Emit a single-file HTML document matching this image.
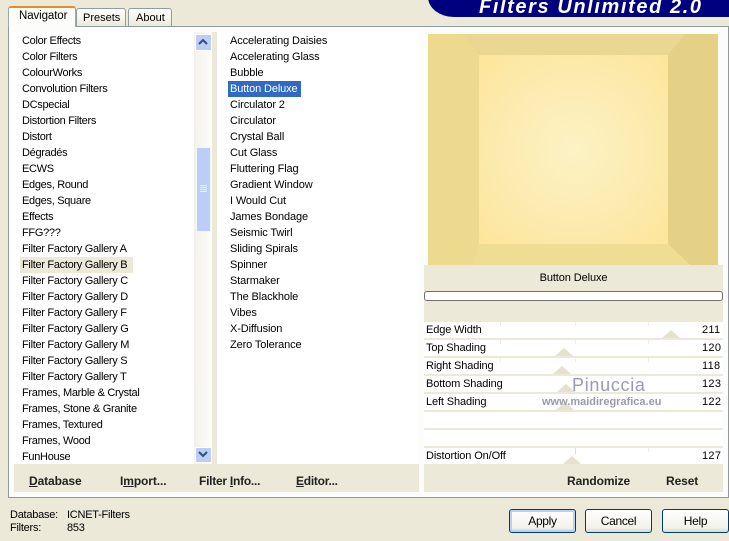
<!DOCTYPE html>
<html><head><meta charset="utf-8"><style>
html,body{margin:0;padding:0}
body{width:729px;height:541px;position:relative;overflow:hidden;background:#ece9d8;font:11px "Liberation Sans",Arial,sans-serif;color:#000}
.a{position:absolute}
.t{position:absolute;white-space:nowrap;line-height:16px;height:16px}
.b{font-weight:bold;font-size:12px;color:#222;letter-spacing:-.1px}
u{text-decoration:underline}
.btn{position:absolute;top:509px;width:65px;height:22px;border:1px solid #003c74;border-radius:3px;background:linear-gradient(#fff,#f3f2ea 80%,#dcd8c8);text-align:center;line-height:22px;font-size:12px;letter-spacing:-.3px}
.row{position:absolute;left:424px;width:299px;height:16px;background:#fff;border-bottom:2px solid #ece9d8}
.tri{position:absolute;width:0;height:0;border-left:9px solid transparent;border-right:9px solid transparent;border-bottom:8px solid #e6e1cd}
.tick{position:absolute;width:1px;height:4px;background:#f0eee2}
</style></head><body>
<div class="a" style="left:428px;top:-20px;width:310px;height:37px;background:#00007f;border-radius:0 0 0 26px / 0 0 0 20px"></div>
<div class="t" style="left:479px;top:-1px;color:#fff;font:italic bold 20px/17px 'Liberation Sans',sans-serif;letter-spacing:1.6px">Filters Unlimited 2.0</div>

<div class="a" style="left:8px;top:26px;width:719px;height:470px;border:1px solid #8f9a9c;background:#fcfcfa"></div>
<div class="a" style="left:76px;top:8px;width:48px;height:17px;border:1px solid #8f9d9d;border-radius:3px 3px 0 0;background:linear-gradient(#fff,#ece9dc)"></div>
<div class="a" style="left:128px;top:8px;width:42px;height:17px;border:1px solid #8f9d9d;border-radius:3px 3px 0 0;background:linear-gradient(#fff,#ece9dc)"></div>
<div class="a" style="left:8px;top:6px;width:68px;height:21px;background:#fcfcfa;border:1px solid #9aa;border-bottom:0;border-top:2px solid #e68b2c;border-radius:3px 3px 0 0;box-sizing:border-box"></div>
<div class="t" style="left:19px;top:8px;font-size:11.500px;letter-spacing:-.1px">Navigator</div>
<div class="t" style="left:83px;top:10px">Presets</div>
<div class="t" style="left:136px;top:10px">About</div>

<div class="a" style="left:14px;top:32px;width:180px;height:432px;background:#fff"></div>
<div class="a" style="left:194px;top:32px;width:18px;height:432px;background:linear-gradient(90deg,#f3f1e8,#fdfdfb)"></div>
<div class="a" style="left:212px;top:32px;width:5px;height:432px;background:#ece9d8"></div>
<div class="a" style="left:217px;top:32px;width:202px;height:432px;background:#fff"></div>
<div class="a" style="left:419px;top:32px;width:5px;height:432px;background:#fcfcfa"></div>

<div class="a" style="left:195px;top:34px;width:15px;height:15px;border:1px solid #fff;background:#bccdf6"></div>
<svg class="a" style="left:197px;top:37px" width="12" height="10"><path d="M2 7L6 3L10 7" fill="none" stroke="#2f4d8a" stroke-width="2"/></svg>
<div class="a" style="left:196px;top:147px;width:13px;height:83px;border:1px solid #f4f6fc;background:#bccdf8"></div>
<svg class="a" style="left:199px;top:184px" width="9" height="10"><path d="M1 1.500H8M1 3.500H8M1 5.500H8M1 7.500H8" stroke="#eef2fd" stroke-width="1"/></svg>
<div class="a" style="left:195px;top:447px;width:15px;height:14px;border:1px solid #fff;background:#bccdf6"></div>
<svg class="a" style="left:197px;top:449px" width="12" height="10"><path d="M2 3L6 7L10 3" fill="none" stroke="#2f4d8a" stroke-width="2"/></svg>

<div class="a" style="left:20px;top:257px;width:113px;height:16px;background:#ece9d8"></div>
<div class="a" style="left:228px;top:81px;width:73px;height:16px;background:#316ac5"></div>

<div style="letter-spacing:-.3px">
<div class="t" style="left:22px;top:33px">Color Effects</div>
<div class="t" style="left:22px;top:49px">Color Filters</div>
<div class="t" style="left:22px;top:65px">ColourWorks</div>
<div class="t" style="left:22px;top:81px">Convolution Filters</div>
<div class="t" style="left:22px;top:97px">DCspecial</div>
<div class="t" style="left:22px;top:113px">Distortion Filters</div>
<div class="t" style="left:22px;top:129px">Distort</div>
<div class="t" style="left:22px;top:145px">Dégradés</div>
<div class="t" style="left:22px;top:161px">ECWS</div>
<div class="t" style="left:22px;top:177px">Edges, Round</div>
<div class="t" style="left:22px;top:193px">Edges, Square</div>
<div class="t" style="left:22px;top:209px">Effects</div>
<div class="t" style="left:22px;top:225px">FFG???</div>
<div class="t" style="left:22px;top:241px">Filter Factory Gallery A</div>
<div class="t" style="left:22px;top:257px">Filter Factory Gallery B</div>
<div class="t" style="left:22px;top:273px">Filter Factory Gallery C</div>
<div class="t" style="left:22px;top:289px">Filter Factory Gallery D</div>
<div class="t" style="left:22px;top:305px">Filter Factory Gallery F</div>
<div class="t" style="left:22px;top:321px">Filter Factory Gallery G</div>
<div class="t" style="left:22px;top:337px">Filter Factory Gallery M</div>
<div class="t" style="left:22px;top:353px">Filter Factory Gallery S</div>
<div class="t" style="left:22px;top:369px">Filter Factory Gallery T</div>
<div class="t" style="left:22px;top:385px">Frames, Marble &amp; Crystal</div>
<div class="t" style="left:22px;top:401px">Frames, Stone &amp; Granite</div>
<div class="t" style="left:22px;top:417px">Frames, Textured</div>
<div class="t" style="left:22px;top:433px">Frames, Wood</div>
<div class="t" style="left:22px;top:449px">FunHouse</div>
</div>

<div style="letter-spacing:-.12px">
<div class="t" style="left:230px;top:33px">Accelerating Daisies</div>
<div class="t" style="left:230px;top:49px">Accelerating Glass</div>
<div class="t" style="left:230px;top:65px">Bubble</div>
<div class="t" style="left:230px;top:81px;color:#fff">Button Deluxe</div>
<div class="t" style="left:230px;top:97px">Circulator 2</div>
<div class="t" style="left:230px;top:113px">Circulator</div>
<div class="t" style="left:230px;top:129px">Crystal Ball</div>
<div class="t" style="left:230px;top:145px">Cut Glass</div>
<div class="t" style="left:230px;top:161px">Fluttering Flag</div>
<div class="t" style="left:230px;top:177px">Gradient Window</div>
<div class="t" style="left:230px;top:193px">I Would Cut</div>
<div class="t" style="left:230px;top:209px">James Bondage</div>
<div class="t" style="left:230px;top:225px">Seismic Twirl</div>
<div class="t" style="left:230px;top:241px">Sliding Spirals</div>
<div class="t" style="left:230px;top:257px">Spinner</div>
<div class="t" style="left:230px;top:273px">Starmaker</div>
<div class="t" style="left:230px;top:289px">The Blackhole</div>
<div class="t" style="left:230px;top:305px">Vibes</div>
<div class="t" style="left:230px;top:321px">X-Diffusion</div>
<div class="t" style="left:230px;top:337px">Zero Tolerance</div>
</div>

<svg class="a" style="left:428px;top:34px" width="290" height="231">
<defs><radialGradient id="g" cx="50%" cy="50%" r="68%"><stop offset="0" stop-color="#fcf2c4"/><stop offset="0.5" stop-color="#fcecb2"/><stop offset="1" stop-color="#fde59c"/></radialGradient></defs>
<rect width="290" height="231" fill="#eeda90"/>
<polygon points="35,0 257,0 240,21 51,21" fill="#e9d792"/>
<polygon points="240,21 257,0 290,0 290,231 262,231 240,210" fill="#e5d186"/>
<polygon points="51,210 240,210 262,231 0,231" fill="#f0dd94"/>
<polygon points="0,0 35,0 51,21 51,210 45,231 0,231" fill="#eeda8e"/>
<rect x="51" y="21" width="189" height="189" fill="url(#g)"/>
</svg>

<div class="a" style="left:424px;top:265px;width:299px;height:57px;background:#ece9d8"></div>
<div class="t" style="left:424px;top:270px;width:299px;text-align:center;letter-spacing:-.1px">Button Deluxe</div>
<div class="a" style="left:424px;top:291px;width:297px;height:8px;background:#fff;border:1px solid #707070;border-radius:3px"></div>

<div class="row" style="top:322px"></div>
<div class="row" style="top:340px"></div>
<div class="row" style="top:358px"></div>
<div class="row" style="top:376px"></div>
<div class="row" style="top:394px"></div>
<div class="row" style="top:412px"></div>
<div class="row" style="top:430px"></div>
<div class="row" style="top:448px;border:0"></div>
<div class="tick" style="left:500px;top:322px"></div><div class="tick" style="left:575px;top:322px"></div><div class="tick" style="left:648px;top:322px"></div>
<div class="tick" style="left:500px;top:340px"></div><div class="tick" style="left:575px;top:340px"></div><div class="tick" style="left:648px;top:340px"></div>
<div class="tick" style="left:500px;top:358px"></div><div class="tick" style="left:575px;top:358px"></div><div class="tick" style="left:648px;top:358px"></div>
<div class="tick" style="left:575px;top:448px;height:6px;background:#ddd"></div><div class="tick" style="left:648px;top:448px"></div>
<div class="tri" style="left:662px;top:330px"></div>
<div class="tri" style="left:555px;top:348px"></div>
<div class="tri" style="left:553px;top:366px"></div>
<div class="tri" style="left:557px;top:384px"></div>
<div class="tri" style="left:556px;top:402px"></div>
<div class="tri" style="left:563px;top:456px"></div>

<div style="letter-spacing:-.12px">
<div class="t" style="left:426px;top:322px">Edge Width</div>
<div class="t" style="left:426px;top:340px">Top Shading</div>
<div class="t" style="left:426px;top:358px">Right Shading</div>
<div class="t" style="left:426px;top:376px">Bottom Shading</div>
<div class="t" style="left:426px;top:394px">Left Shading</div>
<div class="t" style="left:426px;top:448px">Distortion On/Off</div>
</div>
<div style="letter-spacing:.3px">
<div class="t" style="left:702px;top:322px">211</div>
<div class="t" style="left:702px;top:340px">120</div>
<div class="t" style="left:702px;top:358px">118</div>
<div class="t" style="left:702px;top:376px">123</div>
<div class="t" style="left:702px;top:394px">122</div>
<div class="t" style="left:702px;top:448px">127</div>
</div>

<div class="t" style="left:572px;top:376px;color:#9a9ab8;font-size:18px;line-height:18px;letter-spacing:.7px">Pinuccia</div>
<div class="t" style="left:542px;top:394px;color:#9a9aa8;font-size:11px;font-weight:bold;letter-spacing:0">www.maidiregrafica.eu</div>

<div class="a" style="left:14px;top:464px;width:405px;height:28px;background:#ece9d8"></div>
<div class="a" style="left:424px;top:464px;width:299px;height:28px;background:#ece9d8"></div>
<div class="t b" style="left:29px;top:473px"><u>D</u>atabase</div>
<div class="t b" style="left:120px;top:473px">I<u>m</u>port...</div>
<div class="t b" style="left:199px;top:473px;letter-spacing:-.25px">Filter <u>I</u>nfo...</div>
<div class="t b" style="left:296px;top:473px;letter-spacing:-.25px"><u>E</u>ditor...</div>
<div class="t b" style="left:567px;top:473px">Randomize</div>
<div class="t b" style="left:666px;top:473px">Reset</div>

<div style="letter-spacing:-.25px">
<div class="t" style="left:10px;top:507px">Database:</div><div class="t" style="left:67px;top:507px">ICNET-Filters</div>
<div class="t" style="left:10px;top:520px">Filters:</div><div class="t" style="left:67px;top:520px">853</div>
</div>

<div class="btn" style="left:509px;box-shadow:inset 0 0 0 2px #bcd0f0">Apply</div>
<div class="btn" style="left:585px">Cancel</div>
<div class="btn" style="left:662px">Help</div>
</body></html>
